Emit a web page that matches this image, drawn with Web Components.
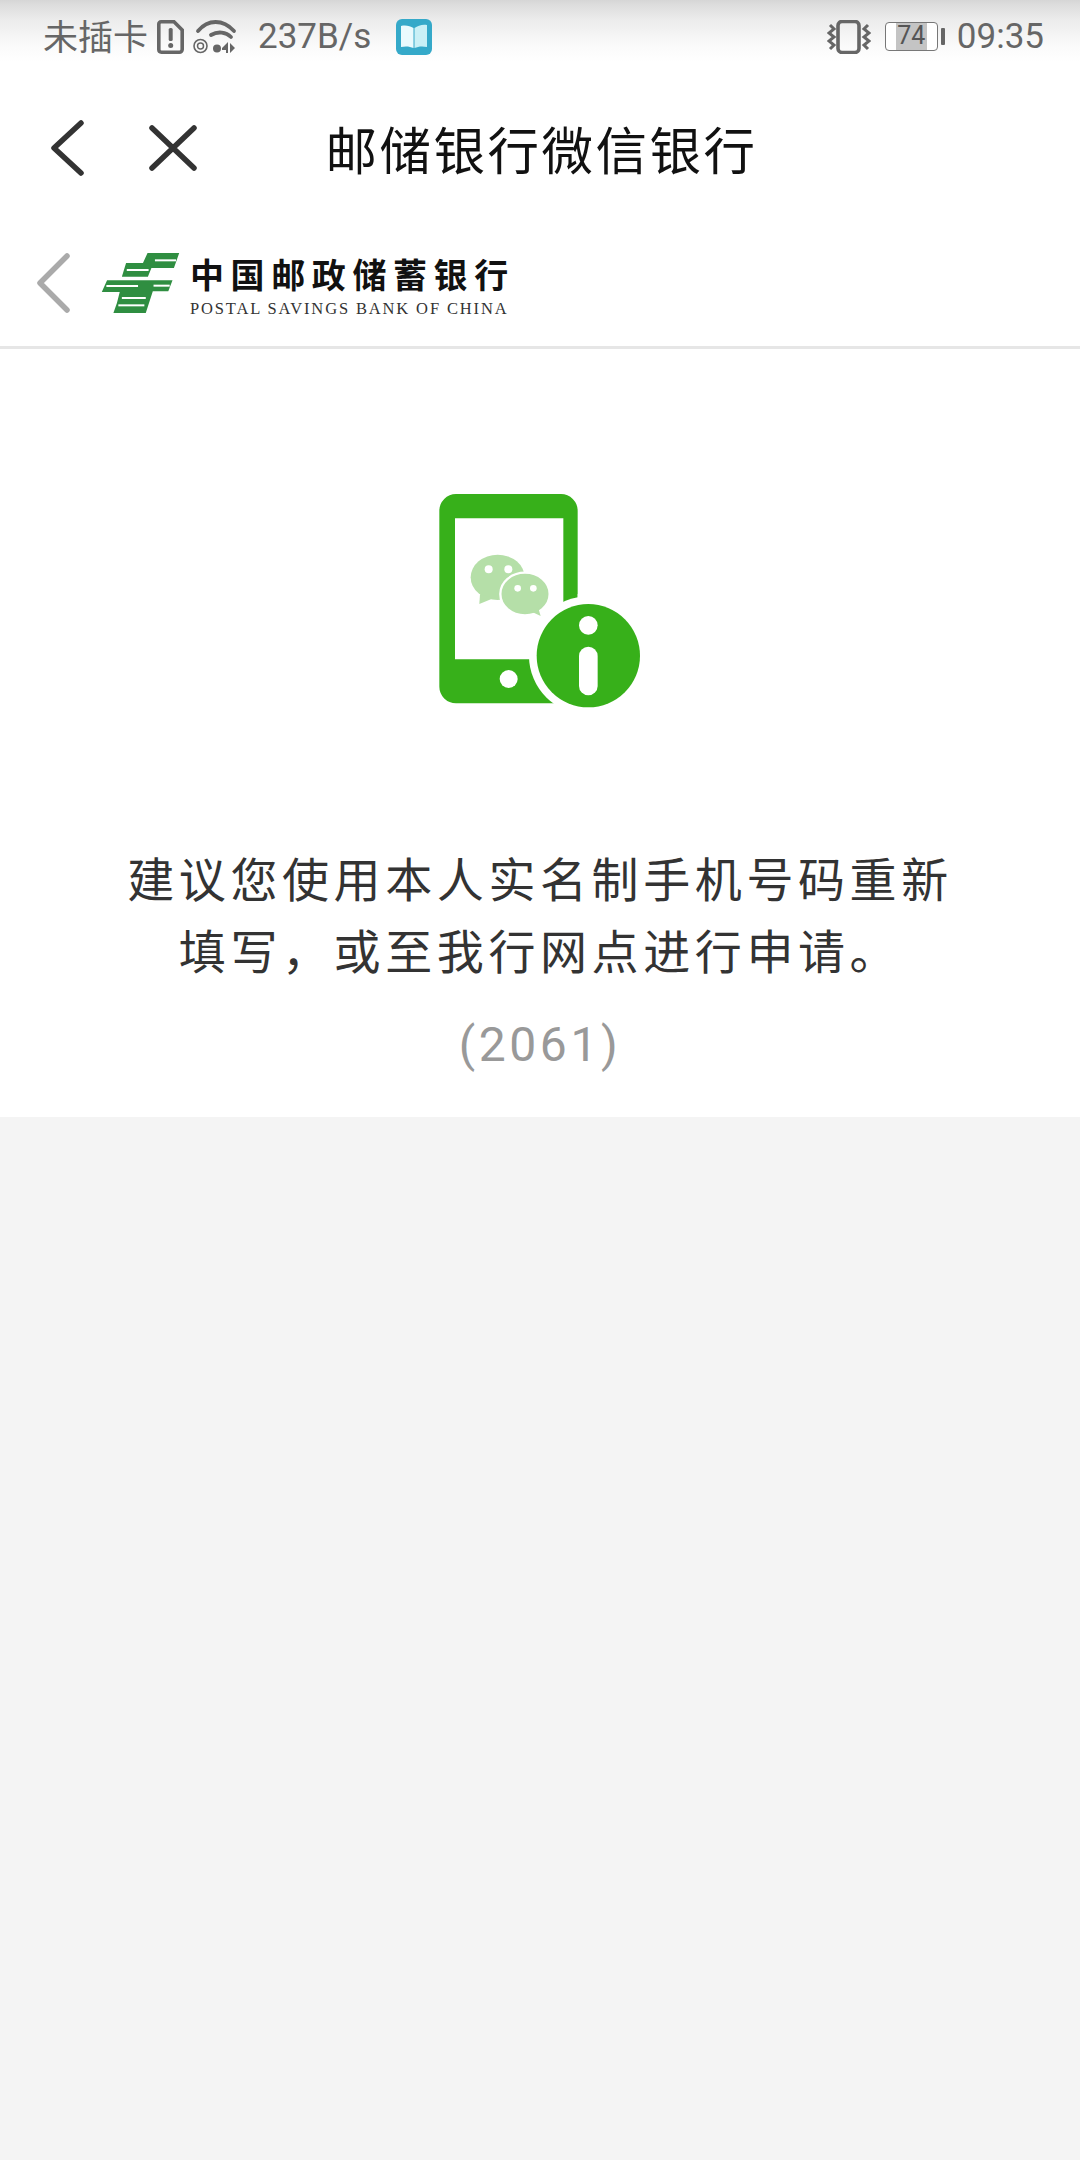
<!DOCTYPE html>
<html lang="zh-CN">
<head>
<meta charset="utf-8">
<title>邮储银行微信银行</title>
<style>
html,body{margin:0;background:#f4f4f4;}
body{font-family:Roboto,"Noto Sans CJK SC",sans-serif;}
app-page{display:block;}
</style>
</head>
<body>
<app-page>
  <status-bar></status-bar>
  <nav-bar>邮储银行微信银行</nav-bar>
  <bank-header></bank-header>
  <notice-card code="(2061)">建议您使用本人实名制手机号码重新填写，或至我行网点进行申请。</notice-card>
</app-page>
<script>
function def(name, html){
  customElements.define(name, class extends HTMLElement{
    constructor(){super();const r=this.attachShadow({mode:"open"});r.innerHTML=html;
      const c=r.querySelector("[data-code]");if(c)c.textContent=this.getAttribute("code")||"";}
  });
}
def("app-page",`<style>:host{display:block;min-height:2160px;background:#f4f4f4}</style><slot></slot>`);
def("status-bar",`<style>
:host{display:flex;justify-content:space-between;align-items:center;box-sizing:border-box;height:74px;padding:0 36px 1px 43px;
background:linear-gradient(#d6d6d6 0,#dcdcdc 4px,#ececec 20px,#fafafa 45px,#fff 62px);color:#666;font:35px/40px Roboto,"Noto Sans CJK SC",sans-serif}
.g{display:flex;align-items:center}
svg{display:block}
.cn{font-family:"Noto Sans CJK SC",sans-serif;font-size:35px;font-weight:400;margin-bottom:4px}
</style>
<div class="g"><span class="cn">未插卡</span>
<svg style="margin-left:9px" width="27" height="34" viewBox="0 0 27 34"><path d="M4 1.800H17L25.200 10V29.500A2.800 2.800 0 0 1 22.400 32.200H4.500A2.800 2.800 0 0 1 1.800 29.500V4A2.200 2.200 0 0 1 4 1.800Z" fill="none" stroke="#666" stroke-width="3.600"/><rect x="11.700" y="8" width="4" height="13" rx="1.600" fill="#666"/><circle cx="13.700" cy="25.500" r="2.500" fill="#666"/></svg>
<svg style="margin-left:9px" width="44" height="34" viewBox="0 0 44 34"><g fill="none" stroke="#666" stroke-linecap="round"><path d="M5 11C15 -1 30 -1 41 11" stroke-width="3.800"/><path d="M18 15C25 11 33 12 38 17" stroke-width="3.800"/><circle cx="7.500" cy="26" r="6.500" stroke-width="1.600"/><circle cx="7.500" cy="26" r="3" stroke-width="1.500"/></g><circle cx="24" cy="28.500" r="4" fill="#666"/><path d="M35 22V33H33V30H29V28ZM37 23L42 28L37 33Z" fill="#666"/></svg>
<span style="margin-left:21px">237B/s</span>
<svg style="margin-left:25px" width="36" height="36" viewBox="0 0 36 36"><rect width="36" height="36" rx="6" fill="#35a9c9"/><path d="M5 7C10 6 14 7 17.500 9V29C14 27.500 10 27 5 28Z" fill="#eafafd"/><path d="M18.500 9C22 7 26 5 31 6V28C26 27 22 27.500 18.500 29Z" fill="#c9f0f6"/></svg></div>
<div class="g">
<svg width="44" height="34" viewBox="0 0 44 34"><rect x="11" y="1.500" width="21" height="31" rx="4" fill="none" stroke="#666" stroke-width="3.600"/><g fill="none" stroke="#666" stroke-width="3"><path d="M3 5L7 9L2 13L7 17L2 21L7 25L3 29"/><path d="M41 5L37 9L42 13L37 17L42 21L37 25L41 29"/></g></svg>
<span style="position:relative;display:block;width:53px;height:29px;margin-left:14px;box-sizing:border-box;border:1.500px solid #777;border-radius:4px;font-size:25px;line-height:26px;text-align:center;background:linear-gradient(90deg,#fff 0,#fff 10px,#c4c4c4 10px,#c4c4c4 41px,#fff 41px);color:#555">74</span>
<span style="display:block;width:4px;height:17px;margin-left:3px;background:#666;border-radius:1px"></span>
<span style="margin-left:12px">09:35</span></div>`);
def("nav-bar",`<style>
:host{display:grid;grid-template-columns:1fr auto 1fr;align-items:center;height:148px;background:#fff}
.l{display:flex;align-items:center;padding-left:50px;gap:65px}
svg{display:block}
.t{font:400 51.500px/56px "Noto Sans CJK SC",sans-serif;letter-spacing:2.500px;color:#111;padding-left:3px}
</style>
<div class="l"><svg width="34" height="56" viewBox="0 0 34 56"><path d="M31 3L4 28L31 53" fill="none" stroke="#333" stroke-width="5.500" stroke-linecap="round" stroke-linejoin="round"/></svg>
<svg width="48" height="46" viewBox="0 0 48 46"><path d="M3 3L45 43M45 3L3 43" fill="none" stroke="#333" stroke-width="5.500" stroke-linecap="round"/></svg></div>
<div class="t"><slot></slot></div><div></div>`);
def("bank-header",`<style>
:host{display:flex;align-items:center;box-sizing:border-box;height:127px;padding:0 0 2px 36px;background:#fff;border-bottom:3px solid #e6e6e6}
svg{display:block}
.w{display:flex;flex-direction:column;margin-left:2px;padding-top:5px}
.c{font:700 34px/40px "Noto Sans CJK SC",serif;letter-spacing:6.600px;color:#111;white-space:nowrap}
.e{font:16.500px/18px "Liberation Serif",serif;letter-spacing:1.860px;color:#333;margin-top:6px;white-space:nowrap}
</style>
<svg width="34" height="60" viewBox="0 0 34 60"><path d="M31 3L4 30L31 57" fill="none" stroke="#aaa" stroke-width="5.500" stroke-linecap="round" stroke-linejoin="round"/></svg>
<svg style="margin-left:23px" width="95" height="70" viewBox="0 0 270 210" preserveAspectRatio="none"><polygon fill="#2f8e41" points="155,15 245,15 230,60 166,60 156,86 82,86 94,45 142,45"/><polygon fill="#2f8e41" points="40,97 226,97 214,130 170,130 150,195 58,195 68,165 76,132 25,132"/><g fill="none" stroke="#fff" stroke-width="6"><path d="M176 37H236"/><path d="M96 66H158"/><path d="M38 114H128"/><path d="M172 113H218"/><path d="M82 150H150"/><path d="M72 172H146"/></g></svg>
<div class="w"><div class="c">中国邮政储蓄银行</div><div class="e">POSTAL SAVINGS BANK OF CHINA</div></div>`);
def("notice-card",`<style>
:host{display:flex;flex-direction:column;align-items:center;box-sizing:border-box;height:768px;padding-top:121px;background:#fff}
svg{display:block}
.m{width:840px;margin-top:111px;font:400 47px/72px "Noto Sans CJK SC",sans-serif;letter-spacing:4.600px;color:#333;text-align:center}
.k{margin-top:24px;font:48px/72px Roboto,sans-serif;letter-spacing:3.600px;color:#999}
</style>
<svg width="260" height="260" viewBox="0 0 780 780">
<path fill="#37b01a" fill-rule="evenodd" d="M138 72H453A50 50 0 0 1 503 122V640H503V700H138A50 50 0 0 1 88 650V122A50 50 0 0 1 138 72ZM135 145V568H460V145Z"/>
<circle cx="535" cy="557" r="178" fill="#fff"/>
<path fill="#fff" d="M440 700H520V780H440Z"/>
<path fill="#fff" d="M503 372H520V700H503Z"/>
<circle cx="296" cy="627" r="27" fill="#fff"/>
<circle cx="535" cy="557" r="155" fill="#37b01a"/>
<circle cx="535" cy="466" r="28" fill="#fff"/>
<rect x="507" y="530" width="56" height="146" rx="28" fill="#fff"/>
<ellipse cx="263" cy="322" rx="81" ry="68" fill="#b5dfa8"/><path d="M210 372L208 402L250 385Z" fill="#b5dfa8"/>
<circle cx="236" cy="298" r="12" fill="#fff"/><circle cx="295" cy="298" r="12" fill="#fff"/>
<ellipse cx="345" cy="372" rx="74" ry="64" fill="#b5dfa8" stroke="#fff" stroke-width="7"/><path d="M365 425L392 438L385 415Z" fill="#b5dfa8"/>
<circle cx="323" cy="355" r="10" fill="#fff"/><circle cx="370" cy="355" r="10" fill="#fff"/>
</svg>
<div class="m"><slot></slot></div><div class="k" data-code></div>`);
</script>
</body>
</html>
